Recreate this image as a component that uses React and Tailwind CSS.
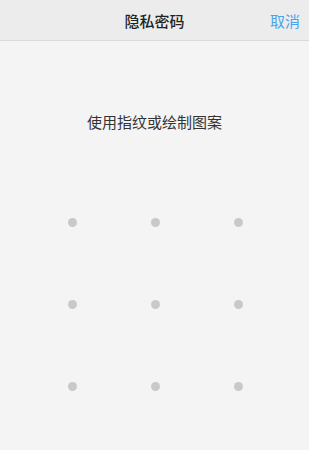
import React from 'react';

const FONT = { fontFamily: '"Noto Sans CJK SC", "Noto Sans", sans-serif' };

export default function App() {
    const dots = Array.from({ length: 9 });

    return (
        <div className="w-[309px] h-[450px] bg-[#f4f4f4] flex flex-col overflow-hidden" style={FONT}>
            {/* top bar */}
            <div className="relative h-[41px] bg-[#ececec] border-b border-[#d9d9d9] flex items-center justify-center">
                <div className="text-[15px] text-[#222] font-medium leading-none">隐私密码</div>
                <button className="absolute right-[9px] top-0 h-full flex items-center text-[15px] text-[#4ba3ee] leading-none">
                    取消
                </button>
            </div>

            {/* hint */}
            <div className="mt-[71px] text-center text-[15px] text-[#333] leading-5">
                使用指纹或绘制图案
            </div>

            {/* pattern grid */}
            <div className="mt-[86px] ml-[31px] grid grid-cols-3 w-[249px] gap-y-[73px]">
                {dots.map((_, i) => (
                    <div key={i} className="flex justify-center">
                        <div className="w-[9px] h-[9px] rounded-full bg-[#c9c9c9]" />
                    </div>
                ))}
            </div>
        </div>
    );
}
